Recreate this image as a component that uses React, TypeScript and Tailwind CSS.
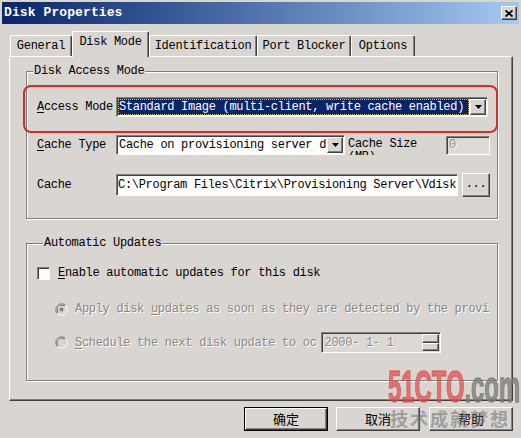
import React from "react"

const raised =
  "border border-t-white border-l-white border-r-[#404040] border-b-[#404040] shadow-[inset_-1px_-1px_0_#808080]"
const sunken =
  "border border-t-[#808080] border-l-[#808080] border-r-white border-b-white shadow-[inset_1px_1px_0_#404040] p-[1px]"
const disabledText = "text-[#8c8884] [text-shadow:1px_1px_0_#ffffff]"

function Arrow() {
  return (
    <svg width="7" height="4" viewBox="0 0 7 4">
      <polygon points="0,0 7,0 3.5,4" fill="#000" />
    </svg>
  )
}

function DropButton() {
  return (
    <div className={`w-[16px] h-full bg-[#d9d5d1] flex items-center justify-center ${raised}`}>
      <Arrow />
    </div>
  )
}

function Tab({ width, active, children }: { width: string; active?: boolean; children: React.ReactNode }) {
  if (active) {
    return (
      <div
        className={`${width} h-[26px] -mb-[1px] relative z-10 bg-[#d9d5d1] border-t border-l border-t-white border-l-white border-r border-r-[#404040] shadow-[inset_-1px_0_0_#808080] rounded-t-[2px] flex justify-center pt-[3px]`}
      >
        {children}
      </div>
    )
  }
  return (
    <div
      className={`${width} h-[21px] border-t border-l border-t-white border-l-white border-r border-r-[#404040] shadow-[inset_-1px_0_0_#808080] rounded-t-[2px] flex justify-center pt-[3px]`}
    >
      {children}
    </div>
  )
}

function Group({
  title,
  titleLeft,
  className,
  children,
}: {
  title: string
  titleLeft: string
  className: string
  children: React.ReactNode
}) {
  return (
    <div className={`relative border border-[#808080] shadow-[inset_1px_1px_0_#fff,1px_1px_0_#fff] ${className}`}>
      <span className={`absolute -top-[7px] ${titleLeft} bg-[#d9d5d1] px-[1px] leading-[13px]`}>{title}</span>
      {children}
    </div>
  )
}

function Radio({ checked }: { checked?: boolean }) {
  return (
    <svg width="13" height="13" viewBox="0 0 13 13" className="shrink-0">
      <path d="M10.6 2.4 A5.8 5.8 0 0 0 2.4 10.6" fill="none" stroke="#808080" strokeWidth="1" />
      <path d="M2.4 10.6 A5.8 5.8 0 0 0 10.6 2.4" fill="none" stroke="#ffffff" strokeWidth="1" />
      <path d="M9.8 3.2 A4.7 4.7 0 0 0 3.2 9.8" fill="none" stroke="#404040" strokeWidth="1" />
      <path d="M3.2 9.8 A4.7 4.7 0 0 0 9.8 3.2" fill="none" stroke="#d4d0c8" strokeWidth="1" />
      <circle cx="6.5" cy="6.5" r="4" fill="#d9d5d1" />
      {checked && <circle cx="6.5" cy="6.5" r="2" fill="#808080" />}
    </svg>
  )
}

function Button({ focused, children, className }: { focused?: boolean; children: React.ReactNode; className?: string }) {
  return (
    <div
      className={`w-[84px] h-[24px] flex items-center justify-center font-['Noto_Sans_CJK_SC',sans-serif] text-[13px] tracking-normal ${
        focused ? "border border-black" : ""
      } ${className ?? ""}`}
    >
      <div className={`w-full h-full flex items-center justify-center ${raised}`}>{children}</div>
    </div>
  )
}

export default function App() {
  return (
    <div className="relative w-[521px] h-[438px] overflow-hidden bg-[#d9d5d1] text-black font-['Liberation_Mono',monospace] text-[12px] tracking-[-0.3px] leading-[14px]">
      {/* title bar */}
      <div className="mx-[2px] mt-[2px] h-[22px] bg-gradient-to-r from-[#0a246a] to-[#a6caf0] flex items-center justify-between pl-[2px] pr-[2px]">
        <span className="text-white font-bold text-[13px] tracking-[0.1px]">Disk Properties</span>
        <div className={`w-[16px] h-[14px] bg-[#d9d5d1] flex items-center justify-center ${raised}`}>
          <svg width="8" height="7" viewBox="0 0 8 7">
            <path d="M0.5 0.5 L7.5 6.5 M7.5 0.5 L0.5 6.5" stroke="#000" strokeWidth="1.8" />
          </svg>
        </div>
      </div>

      {/* tabs */}
      <div className="mt-[7px] pl-[10px] h-[25px] flex items-end">
        <Tab width="w-[62px]">General</Tab>
        <Tab width="w-[77px]" active>
          Disk Mode
        </Tab>
        <Tab width="w-[108px]">Identification</Tab>
        <Tab width="w-[94px]">Port Blocker</Tab>
        <Tab width="w-[64px]">Options</Tab>
      </div>

      {/* panel */}
      <div className="ml-[9px] w-[504px] h-[345px] border border-t-white border-l-white border-r-[#404040] border-b-[#404040] shadow-[inset_-1px_-1px_0_#808080] flex flex-col pl-[16px]">
        <Group title="Disk Access Mode" titleLeft="left-[6px]" className="mt-[14px] w-[472px] h-[148px] shrink-0">
          <div className="flex flex-col pt-[25px] pl-[10px]">
            <div className="relative flex items-center h-[20px]">
              <div className="absolute -left-[14px] -top-[12px] w-[475px] h-[48px] border-2 border-[#d42b2b] rounded-[8px] pointer-events-none" />
              <span className="w-[79px] shrink-0">
                <span className="underline underline-offset-2">A</span>ccess Mode
              </span>
              <div className={`w-[372px] h-[20px] bg-white flex ${sunken}`}>
                <div className="flex-1 bg-[#0a246a] text-white pl-[1px] flex items-center outline outline-1 outline-dotted outline-[#c8c070] -outline-offset-1 whitespace-nowrap overflow-hidden">
                  Standard Image (multi-client, write cache enabled)
                </div>
                <div className="w-[1px]" />
                <DropButton />
              </div>
            </div>

            <div className="mt-[18px] flex items-center h-[20px]">
              <span className="w-[79px] shrink-0">
                <span className="underline underline-offset-2">C</span>ache Type
              </span>
              <div className={`w-[229px] h-[20px] bg-white flex ${sunken}`}>
                <div className="flex-1 pl-[1px] flex items-center whitespace-nowrap overflow-hidden">
                  Cache on provisioning server d
                </div>
                <DropButton />
              </div>
              <div className="ml-[3px] w-[98px] h-[20px] overflow-hidden leading-[13px] pt-[3px]">Cache Size (MB)</div>
              <div className={`w-[44px] h-[19px] bg-[#dedad6] flex items-center pl-[2px] ${sunken} ${disabledText}`}>0</div>
            </div>

            <div className="mt-[19px] flex items-center h-[22px]">
              <span className="w-[79px] shrink-0">Cache</span>
              <div className={`w-[342px] h-[22px] bg-white flex items-center pl-[1px] whitespace-nowrap overflow-hidden ${sunken}`}>
                C:\Program Files\Citrix\Provisioning Server\Vdisk
              </div>
              <div className={`ml-[4px] w-[28px] h-[24px] bg-[#d9d5d1] flex items-center justify-center pb-[2px] ${raised}`}>
                ...
              </div>
            </div>
          </div>
        </Group>

        <Group title="Automatic Updates" titleLeft="left-[16px]" className="mt-[24px] w-[472px] h-[138px] shrink-0">
          <div className="flex flex-col pt-[22px] pl-[10px]">
            <div className="flex items-center h-[14px]">
              <div className={`w-[13px] h-[13px] bg-white shrink-0 ${sunken}`} />
              <span className="ml-[8px]">
                <span className="underline underline-offset-2">E</span>nable automatic updates for this disk
              </span>
            </div>

            <div className="mt-[22px] ml-[18px] flex items-center h-[14px]">
              <Radio checked />
              <span className={`ml-[7px] w-[415px] overflow-hidden whitespace-nowrap ${disabledText}`}>
                Apply disk <span className="underline underline-offset-2">u</span>pdates as soon as they are detected by the provisioning
              </span>
            </div>

            <div className="mt-[16px] ml-[18px] flex items-center h-[21px]">
              <Radio />
              <span className={`ml-[7px] whitespace-nowrap ${disabledText}`}>
                <span className="underline underline-offset-2">S</span>chedule the next disk update to oc
              </span>
              <div className={`ml-[4px] w-[120px] h-[21px] bg-[#dcd8d4] flex ${sunken}`}>
                <span className={`flex-1 pl-[2px] flex items-center ${disabledText}`}>2000- 1- 1</span>
                <div className="w-[17px] flex flex-col">
                  <div className={`flex-1 bg-[#d9d5d1] ${raised}`} />
                  <div className={`flex-1 bg-[#d9d5d1] ${raised}`} />
                </div>
              </div>
            </div>
          </div>
        </Group>
      </div>

      {/* buttons */}
      <div className="mt-[6px] flex justify-end pr-[8px]">
        <Button focused>确定</Button>
        <Button className="ml-[8px]">取消</Button>
        <Button className="ml-[9px]">帮助</Button>
      </div>

      {/* watermark */}
      <div className="absolute left-[388px] top-[364px] pointer-events-none select-none">
        <div className="origin-left scale-x-[0.53] font-['Liberation_Sans',sans-serif] font-bold text-[45px] leading-none tracking-normal whitespace-nowrap [-webkit-text-stroke:1.5px_currentColor]">
          <span className="text-[#e04a4a]/70">51CTO</span>
          <span className="text-[#7a7a7a]/75">.com</span>
        </div>
      </div>
      <div className="absolute left-[390px] top-[406px] pointer-events-none select-none font-['Noto_Sans_CJK_SC',sans-serif] font-bold text-[18px] leading-[24px] tracking-[2px] text-[#6e6e6e]/55 whitespace-nowrap">
        技术成就梦想
      </div>
    </div>
  )
}
